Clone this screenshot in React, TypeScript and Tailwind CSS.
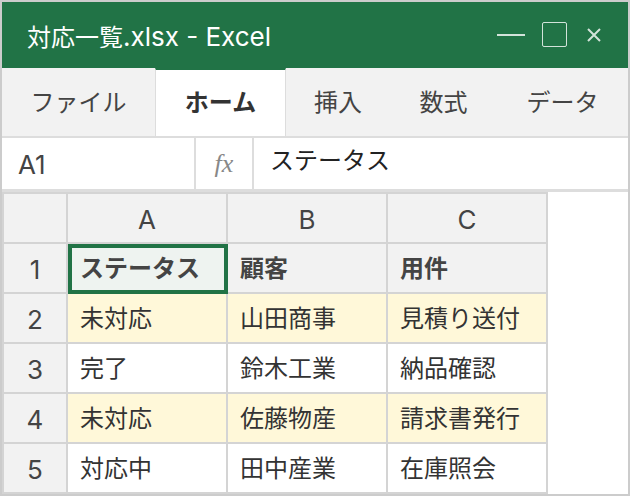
const font = "[font-family:'Inter','Noto_Sans_CJK_JP',sans-serif]";

const tabs = [
  { label: "ファイル", width: "w-[153px]" },
  { label: "ホーム", width: "w-[131px]", active: true },
  { label: "挿入", width: "w-[104px]" },
  { label: "数式", width: "w-[107px]" },
  { label: "データ", width: "flex-1" },
];

const rows = [
  { num: "1", cells: ["ステータス", "顧客", "用件"], head: true },
  { num: "2", cells: ["未対応", "山田商事", "見積り送付"], warn: true },
  { num: "3", cells: ["完了", "鈴木工業", "納品確認"] },
  { num: "4", cells: ["未対応", "佐藤物産", "請求書発行"], warn: true },
  { num: "5", cells: ["対応中", "田中産業", "在庫照会"] },
];

function HeaderCell({ label }: { label: string }) {
  return (
    <div className="flex items-center justify-center bg-[#f2f2f2] pt-[2px] text-[26px] text-[#444444]">
      {label}
    </div>
  );
}

export default function App() {
  return (
    <div className={`${font} flex h-[496px] w-[630px] flex-col border-2 border-[#cccccc] bg-white text-[#333333]`}>
      {/* title bar */}
      <div className="flex h-[66px] shrink-0 items-center justify-between bg-[#217346] pl-[25px] pr-[27px] text-white">
        <span className="pt-[2px] text-[24px]">
          対応一覧<span className="text-[26px]">.xlsx - Excel</span>
        </span>
        <div className="flex items-center text-white/80">
          <div className="h-[2px] w-[28px] bg-current" />
          <div className="mb-[2px] ml-[17px] h-[25px] w-[25px] rounded-[2px] border border-current" />
          <svg className="ml-[20px]" width="14" height="14" viewBox="0 0 14 14" fill="none" stroke="currentColor" strokeWidth="2">
            <path d="M1 1L13 13M13 1L1 13" />
          </svg>
        </div>
      </div>

      {/* ribbon tabs */}
      <div className="flex h-[70px] shrink-0 border-b-2 border-[#dddddd] bg-[#f2f2f2]">
        {tabs.map((tab) => (
          <div
            key={tab.label}
            className={`flex items-center justify-center text-[24px] ${tab.width} ${
              tab.active ? "border-x border-t-2 border-[#dddddd] border-t-[#217346] bg-white font-bold" : "pt-[1px] text-[#444444]"
            }`}
          >
            {tab.label}
          </div>
        ))}
      </div>

      {/* formula bar */}
      <div className="flex h-[54px] shrink-0 border-b-[3px] border-[#dddddd]">
        <div className="flex w-[194px] items-center border-r-2 border-[#dddddd] pl-[16px] pt-[2px] text-[26px] text-[#444444]">
          A1
        </div>
        <div className="flex w-[58px] items-center justify-center border-r-2 border-[#dddddd] font-['Liberation_Serif',serif] text-[26px] italic text-[#888888]">
          fx
        </div>
        <div className="flex items-center pb-[6px] pl-[16px] text-[24px] text-[#222222]">ステータス</div>
      </div>

      {/* sheet */}
      <div className="grid w-[546px] grid-cols-[62px_158px_158px_158px] grid-rows-[48px_48px_48px_48px_48px_48px] gap-[2px] bg-[#d4d4d4] p-[2px]">
        <div className="bg-[#f2f2f2]" />
        <HeaderCell label="A" />
        <HeaderCell label="B" />
        <HeaderCell label="C" />
        {rows.map((row) => (
          <div key={row.num} className="contents">
            <HeaderCell label={row.num} />
            {row.cells.map((cell, i) => {
              const selected = row.head && i === 0;
              return (
                <div
                  key={cell}
                  className={`flex items-center pl-[12px] pt-[2px] text-[24px] ${
                    row.head ? "bg-[#f2f2f2] font-bold text-[#444444]" : row.warn ? "bg-[#fff8d9]" : "bg-white"
                  } ${selected ? "z-10 -mr-[2px] -mb-[2px] border-[4px] border-[#217346] !bg-[#eef3f0] !pl-[8px] !pt-0" : ""}`}
                >
                  {cell}
                </div>
              );
            })}
          </div>
        ))}
      </div>
    </div>
  );
}
